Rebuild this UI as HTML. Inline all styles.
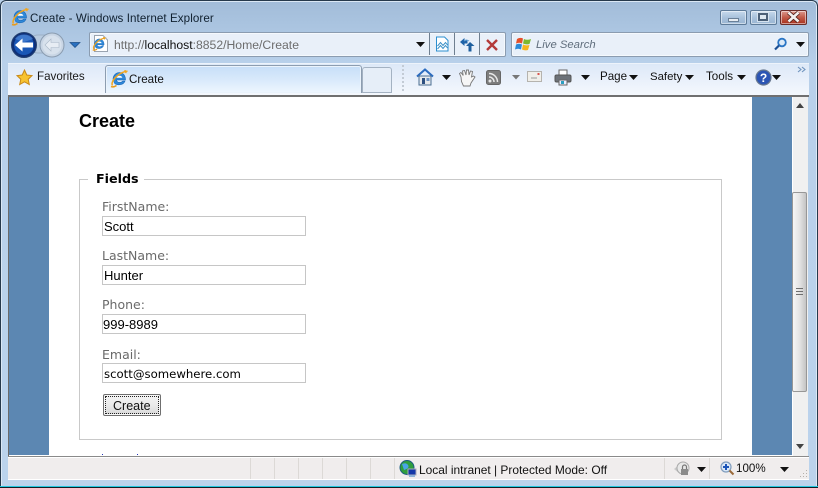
<!DOCTYPE html>
<html><head><meta charset="utf-8"><title>Create - Windows Internet Explorer</title>
<style>
html,body{margin:0;padding:0;background:#fff}
#w{position:relative;width:818px;height:488px;overflow:hidden;font-family:"Liberation Sans",sans-serif;font-size:12px;color:#000;background:#b9d1ea}
#w div,#w svg,#w span.t{position:absolute}
.t{white-space:nowrap;line-height:14px}
.v{font-family:"DejaVu Sans",sans-serif}
.in{left:102px;width:202px;height:18px;background:#fff;border:1px solid #c6c6c6}
.lbl{left:102px;color:#6a6a6a;font-family:"DejaVu Sans",sans-serif;font-size:12.500px;line-height:14px;white-space:nowrap}
.val{left:104px;font-size:13px;line-height:14px;white-space:nowrap}
.sep{top:458px;width:1px;height:21px;background:#dcd9d6}
.wb{top:10px;height:13px;border:1px solid #5d7a98;border-radius:2px;background:linear-gradient(#c8daed,#a9c2dc 50%,#9ab6d3);box-shadow:inset 0 0 0 1px rgba(255,255,255,.5)}
</style></head><body>
<div id="w">
<svg width="0" height="0" style="position:absolute"><defs>
<g id="ie"><path d="M3 9.500C3 5.500 6 2.500 9.500 2.500S15.500 5.500 15.500 10H6.500C6.700 12.500 10.500 13.500 13 11H15C13.500 15.500 6 16 4 12.500" fill="#2f88d8" stroke="#1666b8" stroke-width=".6"/><path d="M6.500 7.800H12.300C11.800 5 7.500 5 6.500 7.800Z" fill="#fff"/><path d="M2.500 15.500C.5 13 5 4.500 16 1.200 13 .5 17.500 .5 15.500 3" fill="none" stroke="#f2a51e" stroke-width="1.500"/><path d="M1 16.500C3 17.500 5 16.500 6.500 15.500" fill="none" stroke="#eb9a14" stroke-width="1.500"/></g>
<path id="tri" d="M0 0H9L4.500 5Z" fill="#111"/>
</defs></svg>

<!-- window frame -->
<div style="left:0;top:0;width:818px;height:488px;box-sizing:border-box;border:1px solid #26394c;border-bottom:0;border-radius:6px 6px 0 0;background:linear-gradient(#a2bcd9 0,#aac4e0 25px,#b8d0ea 62px,#bbd3ec 100%);box-shadow:inset 0 0 0 1px #dbe8f5"></div>
<div style="left:0;top:486px;width:818px;height:2px;background:#111e26;border-top:1px solid #22c7df;box-sizing:border-box"></div>

<!-- title -->
<svg style="left:11px;top:8px" width="18" height="18"><use href="#ie"/></svg>
<span class="t" style="left:30px;top:12px;font-size:11.600px;letter-spacing:.08px;color:#10202f">Create - Windows Internet Explorer</span>

<!-- window buttons -->
<div class="wb" style="left:720px;width:25px"></div>
<div style="left:728px;top:18px;width:9px;height:2px;background:#e8edf2;border:1px solid #6a8098"></div>
<div class="wb" style="left:750px;width:25px"></div>
<div style="left:758px;top:13px;width:6px;height:4px;border:2px solid #4b6078;background:#dce7f1;box-shadow:0 0 0 1px #d5e2ef"></div>
<div class="wb" style="left:780px;width:25px;border-color:#6b2c28;background:linear-gradient(#dd9a8e,#c25a47 50%,#a8311f)"></div>
<svg style="left:786px;top:11px" width="15" height="12"><path d="M2.500 1.500 12.500 10.500M12.500 1.500 2.500 10.500" stroke="#4b1b16" stroke-width="4.200"/><path d="M2.500 1.500 12.500 10.500M12.500 1.500 2.500 10.500" stroke="#f2efee" stroke-width="2.600"/></svg>

<!-- nav buttons -->
<svg style="left:9px;top:30px" width="75" height="29">
<rect x="20" y="5" width="24" height="18" rx="9" fill="#b8cbe0" stroke="#9cb0c6"/>
<circle cx="43" cy="15" r="12" fill="#c8d5e4" stroke="#8a9cb0"/>
<circle cx="43" cy="15" r="9.500" fill="#d7e1ec"/>
<path d="M36 15 42 9V12.500H50V17.500H42V21Z" fill="#e7edf4" stroke="#aab8c8" stroke-width=".6"/>
<circle cx="15" cy="15" r="12.500" fill="#0d2f79" stroke="#26416f"/>
<circle cx="15" cy="15" r="10" fill="#1a57b6"/>
<path d="M6 9A10 8 0 0 1 24 9L15 12Z" fill="#4f86d6" opacity=".7"/>
<path d="M6 15 13.500 8.500V12.500H24V17.500H13.500V21.500Z" fill="#fff"/>
<path d="M61 12.500H71L66 17.500Z" fill="#2a70bf" stroke="#1b4c85" stroke-width=".7"/>
</svg>

<!-- address bar -->
<div style="left:89px;top:32px;width:415px;height:23px;background:#e9f0f9;border:1px solid #8b9cb0;border-radius:2px;box-shadow:inset 0 0 0 1px #f5f9fd"></div>
<svg style="left:92px;top:35px" width="17" height="18"><path d="M2.500 .5H11L15.500 5V16.500H2.500Z" fill="#fff" stroke="#9aa4b0"/></svg>
<svg style="left:92px;top:37px" width="16" height="16"><g transform="scale(.78)"><use href="#ie"/></g></svg>
<span class="t" style="left:114px;top:38px;font-size:12.200px;color:#6d6d6d">http://<span style="color:#111">localhost</span>:8852/Home/Create</span>
<svg style="left:416px;top:42px" width="11" height="7"><use href="#tri"/></svg>
<div style="left:429px;top:33px;width:1px;height:22px;background:#6f7f90"></div>
<div style="left:454px;top:33px;width:1px;height:22px;background:#6f7f90"></div>
<div style="left:479px;top:33px;width:1px;height:22px;background:#6f7f90"></div>
<svg style="left:435px;top:36px" width="15" height="16"><path d="M1.500 1H9.500L13 4.500V15H1.500Z" fill="#fff" stroke="#2c8fd0"/><path d="M2.500 10 5.500 6.500 8 9.500 10.500 6.500 12.500 9M2.500 13 5.500 9.500 8 12.500 10.500 9.500 12.500 12" fill="none" stroke="#3a8fc6"/></svg>
<svg style="left:459px;top:37px" width="17" height="16"><path d="M1 5 5.500 1V3.500H8.500V6.500H5.500V9Z" fill="#1f63a8"/><path d="M15.500 9 11 5 7 9H9.500V14.500H12.500V9Z" fill="#1f5f9e"/><path d="M5 4C7 2.500 9 3 10 4" fill="none" stroke="#6ca6d8"/></svg>
<svg style="left:485px;top:38px" width="14" height="14"><path d="M2 2 12 12M12 2 2 12" stroke="#b33a3a" stroke-width="2.400"/></svg>

<!-- search -->
<div style="left:511px;top:32px;width:296px;height:23px;background:#e9f0f9;border:1px solid #8b9cb0;border-radius:2px;box-shadow:inset 0 0 0 1px #f5f9fd"></div>
<svg style="left:515px;top:36px" width="17" height="16"><path d="M2 3Q5 1 8 2.500L7 7.500Q4.500 6 1 7.500Z" fill="#e5502a"/><path d="M9 3Q12 4.500 16 3L14.500 8Q11.500 9 8 7.500Z" fill="#7db92e"/><path d="M1 8.500Q4 7 7 8.500L6 13.500Q3 12 0 13.500Z" fill="#2c8ad8"/><path d="M8 8.500Q11 10 14.500 9L13 14Q10 15 7 13.500Z" fill="#f6b51c"/></svg>
<span class="t" style="left:536px;top:38px;font-size:11.300px;font-style:italic;color:#5f6d7c">Live Search</span>
<svg style="left:773px;top:37px" width="15" height="15"><circle cx="9" cy="5.500" r="3.800" fill="#dceaf8" stroke="#2a75c4" stroke-width="1.800"/><path d="M6 8.500 2 12.500" stroke="#1b4f94" stroke-width="2.200"/></svg>
<svg style="left:796px;top:42px" width="10" height="7"><use href="#tri"/></svg>

<!-- favorites/tab bar -->
<div style="left:8px;top:63px;width:801px;height:32px;background:linear-gradient(#dce8f7,#e6eefa 40%,#f4f8fd)"></div>
<div style="left:8px;top:63px;width:801px;height:1px;background:#edf3fb"></div>
<svg style="left:16px;top:69px" width="17" height="17"><path d="M8.500 1 10.800 6 16 6.600 12.200 10.200 13.300 15.500 8.500 12.800 3.700 15.500 4.800 10.200 1 6.600 6.200 6Z" fill="#f7c331" stroke="#c98a18"/></svg>
<span class="t" style="left:37px;top:70px;font-size:11.600px;color:#1a1a1a">Favorites</span>
<div style="left:105px;top:65px;width:255px;height:27px;background:linear-gradient(#c6def8,#d8e9fb 50%,#eef6fe);border:1px solid #8d9db0;border-bottom:0;border-radius:3px 3px 0 0;box-shadow:inset 0 0 0 1px #eaf3fc"></div>
<svg style="left:110px;top:70px" width="18" height="18"><use href="#ie"/></svg>
<span class="t" style="left:129px;top:73px;font-size:11.600px;color:#111">Create</span>
<div style="left:362px;top:67px;width:28px;height:24px;background:#e6eef8;border:1px solid #a4b2c2;border-radius:3px 3px 0 0"></div>
<div style="left:402px;top:65px;width:0;height:26px;border-left:2px dotted #c3cbd5"></div>

<!-- command bar icons -->
<svg style="left:416px;top:68px" width="18" height="18"><path d="M1 8.500 9 1.500 17 8.500" fill="none" stroke="#2c6cc0" stroke-width="2"/><rect x="3" y="8" width="12" height="9" fill="#e6e9ec" stroke="#4c6f93"/><rect x="6" y="10" width="3" height="6" fill="#2c4f80"/><rect x="10.500" y="10" width="3" height="3" fill="#6c93c4"/></svg>
<svg style="left:442px;top:75px" width="10" height="6"><use href="#tri"/></svg>
<svg style="left:458px;top:69px" width="18" height="18"><path d="M3 8 1.500 4.500 3 3.500 5.200 6.500 4.500 2 6.500 1.500 8 6 8.500 1 10.500 1 11 6 12.500 2 14.500 2.500 13.500 8 15.500 7 17 8 13 14 12 17H5.500L3.500 12.500Z" fill="#f6f6f6" stroke="#777" stroke-width=".9"/></svg>
<svg style="left:486px;top:70px" width="15" height="15"><rect x=".5" y=".5" width="14" height="14" rx="2" fill="#7d7d7d" stroke="#666"/><circle cx="4" cy="11" r="1.500" fill="#e8e8e8"/><path d="M3 7A5 5 0 0 1 8 12M3 3.500A8.500 8.500 0 0 1 11.500 12" fill="none" stroke="#e8e8e8" stroke-width="1.500"/></svg>
<svg style="left:512px;top:75px" width="10" height="6"><path d="M0 0H8L4 4.500Z" fill="#777"/></svg>
<svg style="left:527px;top:71px" width="16" height="12"><rect x=".5" y=".5" width="14" height="10" fill="#f0efea" stroke="#b5b3ae"/><path d="M4 7H10" stroke="#999"/><rect x="10.500" y="2" width="2" height="2" fill="#d9534f"/></svg>
<svg style="left:554px;top:69px" width="18" height="17"><rect x="5" y="1" width="8" height="5" fill="#fff" stroke="#666"/><rect x="1" y="6" width="16" height="7" rx="1.500" fill="#6d7278" stroke="#555"/><rect x="5" y="11" width="8" height="5" fill="#eef" stroke="#666"/><rect x="7" y="12" width="3" height="3" fill="#2a9fc0"/></svg>
<svg style="left:581px;top:75px" width="10" height="6"><use href="#tri"/></svg>
<span class="t" style="left:600px;top:70px;font-size:11.600px;color:#111">Page</span>
<svg style="left:629px;top:75px" width="10" height="6"><use href="#tri"/></svg>
<span class="t" style="left:650px;top:70px;font-size:11.400px;color:#111">Safety</span>
<svg style="left:685px;top:75px" width="10" height="6"><use href="#tri"/></svg>
<span class="t" style="left:706px;top:70px;font-size:11.600px;color:#111">Tools</span>
<svg style="left:737px;top:75px" width="10" height="6"><use href="#tri"/></svg>
<svg style="left:755px;top:69px" width="17" height="17"><circle cx="8.500" cy="8.500" r="7.500" fill="#2c55b4" stroke="#68788f" stroke-width="1.200"/><text x="8.500" y="13" text-anchor="middle" font-family="Liberation Sans" font-weight="bold" font-size="12" fill="#fff">?</text></svg>
<svg style="left:772px;top:75px" width="10" height="6"><use href="#tri"/></svg>
<svg style="left:797px;top:66px" width="10" height="8"><path d="M1 1 4 3.500 1 6M5 1 8 3.500 5 6" fill="none" stroke="#6f93bd" stroke-width="1.100"/></svg>

<!-- content -->
<div style="left:8px;top:95px;width:801px;height:2px;background:#707070"></div>
<div style="left:8px;top:97px;width:1px;height:359px;background:#6b6b6b"></div>
<div style="left:9px;top:97px;width:783px;height:358px;background:#5c87b2"></div>
<div style="left:49px;top:97px;width:703px;height:358px;background:#fff"></div>
<div style="left:9px;top:455px;width:783px;height:1px;background:#fff"></div>
<div style="left:79px;top:179px;width:641px;height:259px;border:1px solid #c9c9c9"></div>
<div style="left:88px;top:172px;width:56px;height:14px;background:#fff"></div>
<span class="t" style="left:79px;top:111px;font-size:18px;line-height:20px;font-weight:bold;color:#000">Create</span>
<span class="t v" style="left:96px;top:172px;font-size:12.700px;font-weight:bold;color:#000">Fields</span>

<div class="lbl" style="top:200px">FirstName:</div>
<div class="in" style="top:216px"></div>
<div class="val" style="top:220px">Scott</div>
<div class="lbl" style="top:249px">LastName:</div>
<div class="in" style="top:265px"></div>
<div class="val" style="top:269px">Hunter</div>
<div class="lbl" style="top:298px">Phone:</div>
<div class="in" style="top:314px"></div>
<div class="val" style="top:318px;left:103px">999-8989</div>
<div class="lbl" style="top:348px">Email:</div>
<div class="in" style="top:363px"></div>
<div class="val v" style="top:367px;font-size:11.700px">scott@somewhere.com</div>

<div style="left:103px;top:394px;width:56px;height:20px;border:1px solid #6f6f6f;border-radius:2px;background:linear-gradient(#f4f4f4,#ebebeb 50%,#d6d6d6);box-shadow:inset 0 0 0 1px #f8f8f8"></div>
<div style="left:105px;top:396px;width:52px;height:16px;border:1px dotted #222"></div>
<span class="t" style="left:113px;top:399px;font-size:12.500px;color:#111">Create</span>
<div style="left:102px;top:454px;width:1px;height:1px;background:#2233bb"></div>
<div style="left:137px;top:454px;width:1px;height:1px;background:#2233bb"></div>

<!-- scrollbar -->
<div style="left:792px;top:97px;width:16px;height:359px;background:#f0f0f0;border-left:1px solid #fff;box-sizing:border-box"></div>
<svg style="left:796px;top:103px" width="9" height="6"><path d="M4 0 8 5H0Z" fill="#444"/></svg>
<svg style="left:796px;top:444px" width="9" height="6"><path d="M0 0H8L4 5Z" fill="#444"/></svg>
<div style="left:792px;top:192px;width:15px;height:200px;box-sizing:border-box;border:1px solid #979797;border-radius:2px;background:linear-gradient(90deg,#f6f6f6,#e4e4e4 50%,#c4c4c4)"></div>
<div style="left:796px;top:288px;width:7px;height:7px;background:repeating-linear-gradient(#6e6e6e 0 1px,transparent 1px 3px)"></div>

<!-- status bar -->
<div style="left:8px;top:456px;width:801px;height:1px;background:#8a8a8a"></div>
<div style="left:8px;top:457px;width:801px;height:23px;background:#f0eded;border-top:1px solid #fff;box-sizing:border-box;border-bottom:1px solid #fff"></div>
<div class="sep" style="left:250px"></div><div class="sep" style="left:274px"></div><div class="sep" style="left:298px"></div><div class="sep" style="left:322px"></div><div class="sep" style="left:346px"></div><div class="sep" style="left:370px"></div><div class="sep" style="left:394px"></div><div class="sep" style="left:664px"></div><div class="sep" style="left:709px"></div>
<svg style="left:399px;top:460px" width="18" height="17"><circle cx="8" cy="7.500" r="7" fill="#2f9e3d" stroke="#1a5a80"/><path d="M3 4Q7 2 9 5T5 10Z" fill="#49a4e6"/><rect x="9" y="9" width="8" height="6" fill="#1337a8" stroke="#aab"/><rect x="10" y="15" width="6" height="2" fill="#8fb3d8"/></svg>
<span class="t" style="left:419px;top:463px;font-size:11.950px;color:#111">Local intranet | Protected Mode: Off</span>
<svg style="left:673px;top:461px" width="18" height="16"><path d="M1 8 7 3 7 13Z" fill="#c9c9c9"/><circle cx="10" cy="7" r="6" fill="#e8e8e8" stroke="#a9a9a9"/><rect x="8" y="8" width="7" height="6" fill="#8b8b8b"/><path d="M9.500 8V6A2 2 0 0 1 13.500 6V8" fill="none" stroke="#777" stroke-width="1.200"/></svg>
<svg style="left:697px;top:467px" width="10" height="6"><use href="#tri"/></svg>
<svg style="left:720px;top:461px" width="15" height="15"><circle cx="6" cy="6" r="5" fill="#dbe8f7" stroke="#7f9cbc" stroke-width="1.200"/><path d="M6 3V9M3 6H9" stroke="#1c55b8" stroke-width="2"/><path d="M9.500 9.500 13.500 13.500" stroke="#9a6a3a" stroke-width="2"/></svg>
<span class="t" style="left:736px;top:462px;font-size:11.600px;color:#111">100%</span>
<svg style="left:780px;top:467px" width="10" height="6"><use href="#tri"/></svg>
<svg style="left:799px;top:470px" width="9" height="9"><path d="M7 0h1v1H7zM4 3h1v1H4zM7 3h1v1H7zM1 6h1v1H1zM4 6h1v1H4zM7 6h1v1H7z" fill="#b5b1ab"/></svg>
</div>
</body></html>
